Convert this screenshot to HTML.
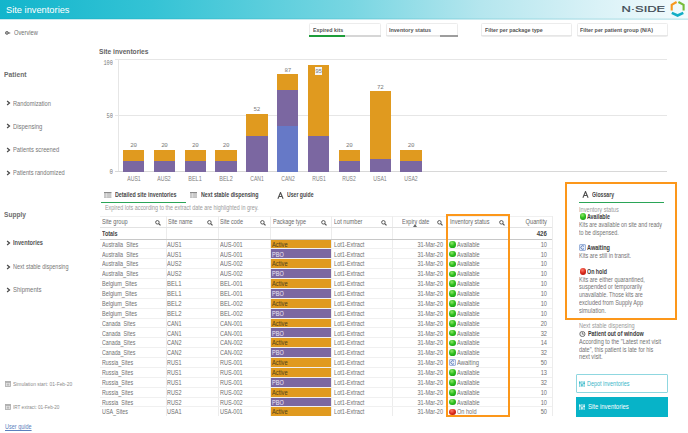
<!DOCTYPE html>
<html><head><meta charset="utf-8"><style>
html,body{margin:0;padding:0;background:#fff;width:688px;height:433px;overflow:hidden;position:relative}
.t{position:absolute;white-space:nowrap;font-family:"Liberation Sans",sans-serif}
.b{position:absolute}
</style></head><body>
<div class="b" style="left:0px;top:0px;width:688px;height:19px;background:linear-gradient(90deg,#12b5cc 0%,#34c3d5 22%,#78d6e2 51%,#b5e6ee 70%,#daf2f7 87%,#f3fbfd 100%);"></div>
<div class="b" style="left:0px;top:18px;width:688px;height:1px;background:rgba(0,150,170,0.10);"></div>
<div class="b" style="left:0px;top:19px;width:688px;height:0.6px;background:rgba(40,170,190,0.25);"></div>
<div class="t" style="left:6.00px;top:4.88px;font-size:9.8px;line-height:9.8px;color:#ffffff;font-weight:400;letter-spacing:0px;font-family:'Liberation Sans', sans-serif;transform:scaleX(0.948);transform-origin:left center;">Site inventories</div>
<svg class="b" style="left:620px;top:0px" width="50" height="19" viewBox="0 0 50 19"><text x="1.5" y="11.8" font-family="Liberation Sans" font-weight="400" font-size="8.5" fill="#3d4852" stroke="#3d4852" stroke-width="0.2" textLength="43.6" lengthAdjust="spacingAndGlyphs">N&#183;SIDE</text></svg>
<svg class="b" style="left:669px;top:0px" width="19" height="19" viewBox="0 0 19 19">
<path d="M7.6 2.0 L2.7 4.8 L2.7 10.6" stroke="#f7981f" stroke-width="2.1" fill="none"/>
<path d="M9.4 2.0 L14.6 4.8 L14.6 10.6" stroke="#76bc3a" stroke-width="2.1" fill="none"/>
<path d="M2.8 12.8 L8.6 15.5 L14.3 12.8" stroke="#13aec6" stroke-width="2.5" fill="none"/>
</svg>
<svg class="b" style="left:4.8px;top:31.1px" width="7" height="4" viewBox="0 0 7 4"><circle cx="1.9" cy="1.9" r="1.45" stroke="#666" stroke-width="0.9" fill="#aaa"/><path d="M3.3 0.9 L5.9 1.9 L3.3 2.9 Z" fill="#666"/></svg>
<div class="t" style="left:14.10px;top:29.82px;font-size:6.6px;line-height:6.6px;color:#707070;font-weight:400;letter-spacing:0px;font-family:'Liberation Sans', sans-serif;transform:scaleX(0.8696);transform-origin:left center;">Overview</div>
<div class="b" style="left:309.4px;top:23.4px;width:71.4px;height:14px;background:#fff;border:1px solid #ececec;box-sizing:border-box;border-radius:1.5px;"></div>
<div class="t" style="left:313.30px;top:26.51px;font-size:6.0px;line-height:6.0px;color:#555;font-weight:700;letter-spacing:0px;font-family:'Liberation Sans', sans-serif;transform:scaleX(0.8878);transform-origin:left center;">Expired kits</div>
<div class="b" style="left:309.4px;top:35.3px;width:71.4px;height:2px;background:#d6d6d6;"></div>
<div class="b" style="left:309.4px;top:35.3px;width:36px;height:2px;background:#1e9d3a;"></div>
<div class="b" style="left:385.5px;top:23.4px;width:72px;height:14px;background:#fff;border:1px solid #ececec;box-sizing:border-box;border-radius:1.5px;"></div>
<div class="t" style="left:389.40px;top:26.51px;font-size:6.0px;line-height:6.0px;color:#555;font-weight:700;letter-spacing:0px;font-family:'Liberation Sans', sans-serif;transform:scaleX(0.9081);transform-origin:left center;">Inventory status</div>
<div class="b" style="left:385.5px;top:35.3px;width:72px;height:1px;background:#e6e6e6;"></div>
<div class="b" style="left:439.5px;top:35.3px;width:18px;height:2px;background:#9d9d9d;"></div>
<div class="b" style="left:480.7px;top:23.4px;width:91px;height:14px;background:#fff;border:1px solid #ececec;box-sizing:border-box;border-radius:1.5px;"></div>
<div class="t" style="left:484.60px;top:26.51px;font-size:6.0px;line-height:6.0px;color:#555;font-weight:700;letter-spacing:0px;font-family:'Liberation Sans', sans-serif;transform:scaleX(0.8843);transform-origin:left center;">Filter per package type</div>
<div class="b" style="left:480.7px;top:35.3px;width:91px;height:1px;background:#e6e6e6;"></div>
<div class="b" style="left:576.5px;top:23.4px;width:91.3px;height:14px;background:#fff;border:1px solid #ececec;box-sizing:border-box;border-radius:1.5px;"></div>
<div class="t" style="left:580.40px;top:26.51px;font-size:6.0px;line-height:6.0px;color:#555;font-weight:700;letter-spacing:0px;font-family:'Liberation Sans', sans-serif;transform:scaleX(0.8938);transform-origin:left center;">Filter per patient group (N/A)</div>
<div class="b" style="left:576.5px;top:35.3px;width:91.3px;height:1px;background:#e6e6e6;"></div>
<div class="t" style="left:4.00px;top:71.34px;font-size:8.0px;line-height:8.0px;color:#6c6c6c;font-weight:700;letter-spacing:0px;font-family:'Liberation Sans', sans-serif;transform:scaleX(0.8436);transform-origin:left center;">Patient</div>
<svg class="b" style="left:6.0px;top:100.4px" width="5" height="6" viewBox="0 0 5 6"><path d="M1.1 1.0 L3.5 3 L1.1 5.0" stroke="#4a4a4a" stroke-width="1.25" fill="none"/></svg>
<div class="t" style="left:13.40px;top:100.72px;font-size:6.6px;line-height:6.6px;color:#777;font-weight:400;letter-spacing:0px;font-family:'Liberation Sans', sans-serif;transform:scaleX(0.8617);transform-origin:left center;">Randomization</div>
<svg class="b" style="left:6.0px;top:123.4px" width="5" height="6" viewBox="0 0 5 6"><path d="M1.1 1.0 L3.5 3 L1.1 5.0" stroke="#4a4a4a" stroke-width="1.25" fill="none"/></svg>
<div class="t" style="left:13.40px;top:123.72px;font-size:6.6px;line-height:6.6px;color:#777;font-weight:400;letter-spacing:0px;font-family:'Liberation Sans', sans-serif;transform:scaleX(0.8981);transform-origin:left center;">Dispensing</div>
<svg class="b" style="left:6.0px;top:147px" width="5" height="6" viewBox="0 0 5 6"><path d="M1.1 1.0 L3.5 3 L1.1 5.0" stroke="#4a4a4a" stroke-width="1.25" fill="none"/></svg>
<div class="t" style="left:13.40px;top:147.32px;font-size:6.6px;line-height:6.6px;color:#777;font-weight:400;letter-spacing:0px;font-family:'Liberation Sans', sans-serif;transform:scaleX(0.8751);transform-origin:left center;">Patients screened</div>
<svg class="b" style="left:6.0px;top:170px" width="5" height="6" viewBox="0 0 5 6"><path d="M1.1 1.0 L3.5 3 L1.1 5.0" stroke="#4a4a4a" stroke-width="1.25" fill="none"/></svg>
<div class="t" style="left:13.40px;top:170.32px;font-size:6.6px;line-height:6.6px;color:#777;font-weight:400;letter-spacing:0px;font-family:'Liberation Sans', sans-serif;transform:scaleX(0.8599);transform-origin:left center;">Patients randomized</div>
<div class="t" style="left:3.50px;top:211.34px;font-size:8.0px;line-height:8.0px;color:#6c6c6c;font-weight:700;letter-spacing:0px;font-family:'Liberation Sans', sans-serif;transform:scaleX(0.8211);transform-origin:left center;">Supply</div>
<svg class="b" style="left:6.0px;top:240px" width="5" height="6" viewBox="0 0 5 6"><path d="M1.1 1.0 L3.5 3 L1.1 5.0" stroke="#4a4a4a" stroke-width="1.25" fill="none"/></svg>
<div class="t" style="left:13.10px;top:240.32px;font-size:6.6px;line-height:6.6px;color:#555;font-weight:700;letter-spacing:0px;font-family:'Liberation Sans', sans-serif;transform:scaleX(0.8526);transform-origin:left center;">Inventories</div>
<svg class="b" style="left:6.0px;top:263.8px" width="5" height="6" viewBox="0 0 5 6"><path d="M1.1 1.0 L3.5 3 L1.1 5.0" stroke="#4a4a4a" stroke-width="1.25" fill="none"/></svg>
<div class="t" style="left:13.10px;top:264.12px;font-size:6.6px;line-height:6.6px;color:#777;font-weight:400;letter-spacing:0px;font-family:'Liberation Sans', sans-serif;transform:scaleX(0.8366);transform-origin:left center;">Next stable dispensing</div>
<svg class="b" style="left:6.0px;top:287px" width="5" height="6" viewBox="0 0 5 6"><path d="M1.1 1.0 L3.5 3 L1.1 5.0" stroke="#4a4a4a" stroke-width="1.25" fill="none"/></svg>
<div class="t" style="left:13.10px;top:287.32px;font-size:6.6px;line-height:6.6px;color:#777;font-weight:400;letter-spacing:0px;font-family:'Liberation Sans', sans-serif;transform:scaleX(0.9115);transform-origin:left center;">Shipments</div>
<svg class="b" style="left:5.2px;top:380.8px" width="6" height="6" viewBox="0 0 6 6"><rect x="0.5" y="0.5" width="5" height="5" fill="#e4e4e4" stroke="#aaa" stroke-width="0.8"/><rect x="0.5" y="0.5" width="5" height="1.3" fill="#aaa"/><rect x="1.8" y="2.6" width="2.4" height="2" fill="#bbb"/></svg>
<div class="t" style="left:13.00px;top:381.01px;font-size:6.0px;line-height:6.0px;color:#8a8a8a;font-weight:400;letter-spacing:0px;font-family:'Liberation Sans', sans-serif;transform:scaleX(0.818);transform-origin:left center;">Simulation start: 01-Feb-20</div>
<svg class="b" style="left:5.2px;top:404.2px" width="6" height="6" viewBox="0 0 6 6"><rect x="0.5" y="0.5" width="5" height="5" fill="#e4e4e4" stroke="#aaa" stroke-width="0.8"/><rect x="0.5" y="0.5" width="5" height="1.3" fill="#aaa"/><rect x="1.8" y="2.6" width="2.4" height="2" fill="#bbb"/></svg>
<div class="t" style="left:13.00px;top:404.21px;font-size:6.0px;line-height:6.0px;color:#8a8a8a;font-weight:400;letter-spacing:0px;font-family:'Liberation Sans', sans-serif;transform:scaleX(0.7715);transform-origin:left center;">IRT extract: 01-Feb-20</div>
<div class="t" style="left:5.10px;top:424.02px;font-size:6.6px;line-height:6.6px;color:#5c80bd;font-weight:400;letter-spacing:0px;font-family:'Liberation Sans', sans-serif;transform:scaleX(0.8341);transform-origin:left center;text-decoration:underline;text-decoration-thickness:0.6px;text-underline-offset:1px;">User guide</div>
<div class="t" style="left:99.00px;top:47.54px;font-size:8.0px;line-height:8.0px;color:#636363;font-weight:700;letter-spacing:0px;font-family:'Liberation Sans', sans-serif;transform:scaleX(0.8308);transform-origin:left center;">Site inventories</div>
<div class="b" style="left:114.5px;top:59.3px;width:552.4px;height:1px;background:#e6e6e6;"></div>
<div class="t" style="right:574.70px;text-align:right;top:60.56px;font-size:6.6px;line-height:6.6px;color:#7a7a7a;font-weight:400;letter-spacing:0px;font-family:'Liberation Mono', monospace;transform:scaleX(0.8);transform-origin:right center;">100</div>
<div class="b" style="left:114.5px;top:115.4px;width:552.4px;height:1px;background:#e6e6e6;"></div>
<div class="t" style="right:574.70px;text-align:right;top:114.26px;font-size:6.6px;line-height:6.6px;color:#7a7a7a;font-weight:400;letter-spacing:0px;font-family:'Liberation Mono', monospace;transform:scaleX(0.8205);transform-origin:right center;">50</div>
<div class="b" style="left:114.5px;top:171.3px;width:552.4px;height:1px;background:#e6e6e6;"></div>
<div class="t" style="right:574.70px;text-align:right;top:169.76px;font-size:6.6px;line-height:6.6px;color:#7a7a7a;font-weight:400;letter-spacing:0px;font-family:'Liberation Mono', monospace;transform:scaleX(0.8819);transform-origin:right center;">0</div>
<div class="b" style="left:117.5px;top:59.8px;width:1px;height:112px;background:#e6e6e6;"></div>
<div class="b" style="left:114.5px;top:171.2px;width:552.4px;height:1.1px;background:#d8d8d8;"></div>
<div class="b" style="left:122.90px;top:160.88px;width:21.3px;height:10.72px;background:#7b67a1"></div>
<div class="b" style="left:122.90px;top:149.82px;width:21.3px;height:11.06px;background:#e09a1f"></div>
<div class="t" style="left:83.55px;width:100px;text-align:center;top:142.95px;font-size:5.9px;line-height:5.9px;color:#7c7c7c;font-weight:400;letter-spacing:-0.3px;font-family:'Liberation Mono', monospace;">20</div>
<div class="t" style="left:83.55px;width:100px;text-align:center;top:176.37px;font-size:6.5px;line-height:6.5px;color:#808080;font-weight:400;letter-spacing:0px;font-family:'Liberation Sans', sans-serif;transform:scaleX(0.7948);transform-origin:center center;">AUS1</div>
<div class="b" style="left:153.73px;top:160.88px;width:21.3px;height:10.72px;background:#7b67a1"></div>
<div class="b" style="left:153.73px;top:149.82px;width:21.3px;height:11.06px;background:#e09a1f"></div>
<div class="t" style="left:114.38px;width:100px;text-align:center;top:142.95px;font-size:5.9px;line-height:5.9px;color:#7c7c7c;font-weight:400;letter-spacing:-0.3px;font-family:'Liberation Mono', monospace;">20</div>
<div class="t" style="left:114.38px;width:100px;text-align:center;top:176.37px;font-size:6.5px;line-height:6.5px;color:#808080;font-weight:400;letter-spacing:0px;font-family:'Liberation Sans', sans-serif;transform:scaleX(0.7948);transform-origin:center center;">AUS2</div>
<div class="b" style="left:184.56px;top:160.88px;width:21.3px;height:10.72px;background:#7b67a1"></div>
<div class="b" style="left:184.56px;top:149.82px;width:21.3px;height:11.06px;background:#e09a1f"></div>
<div class="t" style="left:145.21px;width:100px;text-align:center;top:142.95px;font-size:5.9px;line-height:5.9px;color:#7c7c7c;font-weight:400;letter-spacing:-0.3px;font-family:'Liberation Mono', monospace;">20</div>
<div class="t" style="left:145.21px;width:100px;text-align:center;top:176.37px;font-size:6.5px;line-height:6.5px;color:#808080;font-weight:400;letter-spacing:0px;font-family:'Liberation Sans', sans-serif;transform:scaleX(0.8487);transform-origin:center center;">BEL1</div>
<div class="b" style="left:215.39px;top:160.88px;width:21.3px;height:10.72px;background:#7b67a1"></div>
<div class="b" style="left:215.39px;top:149.82px;width:21.3px;height:11.06px;background:#e09a1f"></div>
<div class="t" style="left:176.04px;width:100px;text-align:center;top:142.95px;font-size:5.9px;line-height:5.9px;color:#7c7c7c;font-weight:400;letter-spacing:-0.3px;font-family:'Liberation Mono', monospace;">20</div>
<div class="t" style="left:176.04px;width:100px;text-align:center;top:176.37px;font-size:6.5px;line-height:6.5px;color:#808080;font-weight:400;letter-spacing:0px;font-family:'Liberation Sans', sans-serif;transform:scaleX(0.8487);transform-origin:center center;">BEL2</div>
<div class="b" style="left:246.22px;top:135.86px;width:21.3px;height:35.74px;background:#7b67a1"></div>
<div class="b" style="left:246.22px;top:113.52px;width:21.3px;height:22.34px;background:#e09a1f"></div>
<div class="t" style="left:206.87px;width:100px;text-align:center;top:107.20px;font-size:5.9px;line-height:5.9px;color:#7c7c7c;font-weight:400;letter-spacing:-0.3px;font-family:'Liberation Mono', monospace;">52</div>
<div class="t" style="left:206.87px;width:100px;text-align:center;top:176.37px;font-size:6.5px;line-height:6.5px;color:#808080;font-weight:400;letter-spacing:0px;font-family:'Liberation Sans', sans-serif;transform:scaleX(0.7784);transform-origin:center center;">CAN1</div>
<div class="b" style="left:277.05px;top:125.80px;width:21.3px;height:45.80px;background:#6679c7"></div>
<div class="b" style="left:277.05px;top:90.06px;width:21.3px;height:35.74px;background:#7b67a1"></div>
<div class="b" style="left:277.05px;top:74.42px;width:21.3px;height:15.64px;background:#e09a1f"></div>
<div class="t" style="left:237.70px;width:100px;text-align:center;top:68.11px;font-size:5.9px;line-height:5.9px;color:#7c7c7c;font-weight:400;letter-spacing:-0.3px;font-family:'Liberation Mono', monospace;">87</div>
<div class="t" style="left:237.70px;width:100px;text-align:center;top:176.37px;font-size:6.5px;line-height:6.5px;color:#808080;font-weight:400;letter-spacing:0px;font-family:'Liberation Sans', sans-serif;transform:scaleX(0.7784);transform-origin:center center;">CAN2</div>
<div class="b" style="left:307.88px;top:135.86px;width:21.3px;height:35.74px;background:#7b67a1"></div>
<div class="b" style="left:307.88px;top:65.49px;width:21.3px;height:70.37px;background:#e09a1f"></div>
<div class="b" style="left:315px;top:67px;width:7.2px;height:8px;background:#f4f5f7;"></div>
<div class="t" style="left:268.43px;width:100px;text-align:center;top:68.79px;font-size:5.9px;line-height:5.9px;color:#7c7c7c;font-weight:400;letter-spacing:-0.3px;font-family:'Liberation Mono', monospace;">95</div>
<div class="t" style="left:268.53px;width:100px;text-align:center;top:176.37px;font-size:6.5px;line-height:6.5px;color:#808080;font-weight:400;letter-spacing:0px;font-family:'Liberation Sans', sans-serif;transform:scaleX(0.7784);transform-origin:center center;">RUS1</div>
<div class="b" style="left:338.71px;top:160.88px;width:21.3px;height:10.72px;background:#7b67a1"></div>
<div class="b" style="left:338.71px;top:149.82px;width:21.3px;height:11.06px;background:#e09a1f"></div>
<div class="t" style="left:299.36px;width:100px;text-align:center;top:142.95px;font-size:5.9px;line-height:5.9px;color:#7c7c7c;font-weight:400;letter-spacing:-0.3px;font-family:'Liberation Mono', monospace;">20</div>
<div class="t" style="left:299.36px;width:100px;text-align:center;top:176.37px;font-size:6.5px;line-height:6.5px;color:#808080;font-weight:400;letter-spacing:0px;font-family:'Liberation Sans', sans-serif;transform:scaleX(0.7784);transform-origin:center center;">RUS2</div>
<div class="b" style="left:369.54px;top:158.75px;width:21.3px;height:12.85px;background:#7b67a1"></div>
<div class="b" style="left:369.54px;top:91.18px;width:21.3px;height:67.58px;background:#e09a1f"></div>
<div class="t" style="left:330.19px;width:100px;text-align:center;top:84.86px;font-size:5.9px;line-height:5.9px;color:#7c7c7c;font-weight:400;letter-spacing:-0.3px;font-family:'Liberation Mono', monospace;">72</div>
<div class="t" style="left:330.19px;width:100px;text-align:center;top:176.37px;font-size:6.5px;line-height:6.5px;color:#808080;font-weight:400;letter-spacing:0px;font-family:'Liberation Sans', sans-serif;transform:scaleX(0.7948);transform-origin:center center;">USA1</div>
<div class="b" style="left:400.37px;top:160.88px;width:21.3px;height:10.72px;background:#7b67a1"></div>
<div class="b" style="left:400.37px;top:149.82px;width:21.3px;height:11.06px;background:#e09a1f"></div>
<div class="t" style="left:361.02px;width:100px;text-align:center;top:142.95px;font-size:5.9px;line-height:5.9px;color:#7c7c7c;font-weight:400;letter-spacing:-0.3px;font-family:'Liberation Mono', monospace;">20</div>
<div class="t" style="left:361.02px;width:100px;text-align:center;top:176.37px;font-size:6.5px;line-height:6.5px;color:#808080;font-weight:400;letter-spacing:0px;font-family:'Liberation Sans', sans-serif;transform:scaleX(0.7948);transform-origin:center center;">USA2</div>
<svg class="b" style="left:104.2px;top:191.8px" width="7.4" height="6.4" viewBox="0 0 7.4 6.4"><rect x="0" y="0" width="7.4" height="6.4" fill="#c9c9c9"/><rect x="0" y="0" width="7.4" height="1.1" fill="#8a8a8a"/><path d="M2.6 1.1 V6.4" stroke="#eeeeee" stroke-width="0.6"/><path d="M0 6.1 H7.4" stroke="#b5b5b5" stroke-width="0.6"/></svg>
<div class="t" style="left:115.00px;top:192.02px;font-size:6.8px;line-height:6.8px;color:#484848;font-weight:700;letter-spacing:0px;font-family:'Liberation Sans', sans-serif;transform:scaleX(0.7864);transform-origin:left center;">Detailed site inventories</div>
<svg class="b" style="left:190.1px;top:191.8px" width="7.4" height="6.4" viewBox="0 0 7.4 6.4"><rect x="0" y="0" width="7.4" height="6.4" fill="#c9c9c9"/><rect x="0" y="0" width="7.4" height="1.1" fill="#8a8a8a"/><path d="M2.6 1.1 V6.4" stroke="#eeeeee" stroke-width="0.6"/><path d="M0 6.1 H7.4" stroke="#b5b5b5" stroke-width="0.6"/></svg>
<div class="t" style="left:201.00px;top:192.02px;font-size:6.8px;line-height:6.8px;color:#484848;font-weight:700;letter-spacing:0px;font-family:'Liberation Sans', sans-serif;transform:scaleX(0.7767);transform-origin:left center;">Next stable dispensing</div>
<svg class="b" style="left:277px;top:191.5px" width="7" height="7" viewBox="0 0 7 7"><path d="M0.9 6.7 L3.5 0.5 L6.1 6.7 M2.0 4.5 H5.0" stroke="#505050" stroke-width="1.1" fill="none"/></svg>
<div class="t" style="left:287.00px;top:192.02px;font-size:6.8px;line-height:6.8px;color:#484848;font-weight:700;letter-spacing:0px;font-family:'Liberation Sans', sans-serif;transform:scaleX(0.7541);transform-origin:left center;">User guide</div>
<div class="b" style="left:100.8px;top:201.8px;width:85.2px;height:1.3px;background:#2aa557;"></div>
<div class="t" style="left:104.90px;top:205.36px;font-size:6.3px;line-height:6.3px;color:#9a9a9a;font-weight:400;letter-spacing:0px;font-family:'Liberation Sans', sans-serif;transform:scaleX(0.857);transform-origin:left center;">Expired lots according to the extract date are highlighted in grey.</div>
<div class="b" style="left:100px;top:216px;width:451.5px;height:1px;background:#f0f0f0;"></div>
<div class="b" style="left:165.6px;top:216px;width:1px;height:200px;background:#ececec;"></div>
<div class="b" style="left:217.7px;top:216px;width:1px;height:200px;background:#ececec;"></div>
<div class="b" style="left:270.4px;top:216px;width:1px;height:200px;background:#ececec;"></div>
<div class="b" style="left:331.3px;top:216px;width:1px;height:200px;background:#ececec;"></div>
<div class="b" style="left:391.8px;top:216px;width:1px;height:200px;background:#ececec;"></div>
<div class="b" style="left:445.6px;top:216px;width:1px;height:200px;background:#ececec;"></div>
<div class="b" style="left:509px;top:216px;width:1px;height:200px;background:#ececec;"></div>
<div class="b" style="left:551.5px;top:216px;width:1px;height:200px;background:#ececec;"></div>
<div class="b" style="left:100px;top:227.2px;width:451.5px;height:1px;background:#e2e2e2;"></div>
<div class="b" style="left:100px;top:239px;width:451.5px;height:1px;background:#c8c8c8;"></div>
<div class="t" style="left:102.20px;top:219.22px;font-size:6.4px;line-height:6.4px;color:#6a6a6a;font-weight:400;letter-spacing:0px;font-family:'Liberation Sans', sans-serif;transform:scaleX(0.8819);transform-origin:left center;">Site group</div>
<svg class="b" style="left:155px;top:219.9px" width="6" height="6" viewBox="0 0 6 6"><circle cx="2.4" cy="2.3" r="1.75" stroke="#505050" stroke-width="0.95" fill="none"/><path d="M3.7 3.6 L5.5 5.4" stroke="#505050" stroke-width="1.25"/></svg>
<div class="t" style="left:167.80px;top:219.22px;font-size:6.4px;line-height:6.4px;color:#6a6a6a;font-weight:400;letter-spacing:0px;font-family:'Liberation Sans', sans-serif;transform:scaleX(0.8547);transform-origin:left center;">Site name</div>
<svg class="b" style="left:207.4px;top:219.9px" width="6" height="6" viewBox="0 0 6 6"><circle cx="2.4" cy="2.3" r="1.75" stroke="#505050" stroke-width="0.95" fill="none"/><path d="M3.7 3.6 L5.5 5.4" stroke="#505050" stroke-width="1.25"/></svg>
<div class="t" style="left:219.90px;top:219.22px;font-size:6.4px;line-height:6.4px;color:#6a6a6a;font-weight:400;letter-spacing:0px;font-family:'Liberation Sans', sans-serif;transform:scaleX(0.8628);transform-origin:left center;">Site code</div>
<svg class="b" style="left:259.8px;top:219.9px" width="6" height="6" viewBox="0 0 6 6"><circle cx="2.4" cy="2.3" r="1.75" stroke="#505050" stroke-width="0.95" fill="none"/><path d="M3.7 3.6 L5.5 5.4" stroke="#505050" stroke-width="1.25"/></svg>
<div class="t" style="left:272.60px;top:219.22px;font-size:6.4px;line-height:6.4px;color:#6a6a6a;font-weight:400;letter-spacing:0px;font-family:'Liberation Sans', sans-serif;transform:scaleX(0.8545);transform-origin:left center;">Package type</div>
<svg class="b" style="left:320.9px;top:219.9px" width="6" height="6" viewBox="0 0 6 6"><circle cx="2.4" cy="2.3" r="1.75" stroke="#505050" stroke-width="0.95" fill="none"/><path d="M3.7 3.6 L5.5 5.4" stroke="#505050" stroke-width="1.25"/></svg>
<div class="t" style="left:333.50px;top:219.22px;font-size:6.4px;line-height:6.4px;color:#6a6a6a;font-weight:400;letter-spacing:0px;font-family:'Liberation Sans', sans-serif;transform:scaleX(0.8785);transform-origin:left center;">Lot number</div>
<svg class="b" style="left:381.4px;top:219.9px" width="6" height="6" viewBox="0 0 6 6"><circle cx="2.4" cy="2.3" r="1.75" stroke="#505050" stroke-width="0.95" fill="none"/><path d="M3.7 3.6 L5.5 5.4" stroke="#505050" stroke-width="1.25"/></svg>
<div class="t" style="left:401.50px;top:219.22px;font-size:6.4px;line-height:6.4px;color:#6a6a6a;font-weight:400;letter-spacing:0px;font-family:'Liberation Sans', sans-serif;transform:scaleX(0.8535);transform-origin:left center;">Expiry date</div>
<svg class="b" style="left:413px;top:224.3px" width="4" height="3" viewBox="0 0 4 3"><path d="M0 3 L2 0 L4 3 Z" fill="#666"/></svg>
<svg class="b" style="left:436.9px;top:219.9px" width="6" height="6" viewBox="0 0 6 6"><circle cx="2.4" cy="2.3" r="1.75" stroke="#505050" stroke-width="0.95" fill="none"/><path d="M3.7 3.6 L5.5 5.4" stroke="#505050" stroke-width="1.25"/></svg>
<div class="t" style="left:449.70px;top:219.22px;font-size:6.4px;line-height:6.4px;color:#6a6a6a;font-weight:400;letter-spacing:0px;font-family:'Liberation Sans', sans-serif;transform:scaleX(0.8753);transform-origin:left center;">Inventory status</div>
<svg class="b" style="left:499px;top:219.9px" width="6" height="6" viewBox="0 0 6 6"><circle cx="2.4" cy="2.3" r="1.75" stroke="#505050" stroke-width="0.95" fill="none"/><path d="M3.7 3.6 L5.5 5.4" stroke="#505050" stroke-width="1.25"/></svg>
<div class="t" style="right:141.20px;text-align:right;top:219.22px;font-size:6.4px;line-height:6.4px;color:#6a6a6a;font-weight:400;letter-spacing:0px;font-family:'Liberation Sans', sans-serif;transform:scaleX(0.8903);transform-origin:right center;">Quantity</div>
<div class="t" style="left:102.30px;top:230.72px;font-size:6.4px;line-height:6.4px;color:#444;font-weight:700;letter-spacing:0px;font-family:'Liberation Sans', sans-serif;transform:scaleX(0.8443);transform-origin:left center;">Totals</div>
<div class="t" style="right:141.30px;text-align:right;top:230.67px;font-size:6.5px;line-height:6.5px;color:#444;font-weight:700;letter-spacing:0px;font-family:'Liberation Sans', sans-serif;transform:scaleX(0.9393);transform-origin:right center;">426</div>
<div class="t" style="left:102.30px;top:241.70px;font-size:6.3px;line-height:6.3px;color:#707070;font-weight:400;letter-spacing:0px;font-family:'Liberation Sans', sans-serif;transform:scaleX(0.8619);transform-origin:left center;">Australia_Sites</div>
<div class="t" style="left:167.30px;top:241.70px;font-size:6.3px;line-height:6.3px;color:#707070;font-weight:400;letter-spacing:0px;font-family:'Liberation Sans', sans-serif;transform:scaleX(0.8813);transform-origin:left center;">AUS1</div>
<div class="t" style="left:219.80px;top:241.70px;font-size:6.3px;line-height:6.3px;color:#707070;font-weight:400;letter-spacing:0px;font-family:'Liberation Sans', sans-serif;transform:scaleX(0.888);transform-origin:left center;">AUS-001</div>
<div class="b" style="left:271px;top:240px;width:60px;height:8px;background:#e09a1f"></div>
<div class="t" style="left:272.20px;top:241.70px;font-size:6.3px;line-height:6.3px;color:#4d3f1d;font-weight:400;letter-spacing:0px;font-family:'Liberation Sans', sans-serif;transform:scaleX(0.9093);transform-origin:left center;">Active</div>
<div class="t" style="left:333.60px;top:241.70px;font-size:6.3px;line-height:6.3px;color:#707070;font-weight:400;letter-spacing:0px;font-family:'Liberation Sans', sans-serif;transform:scaleX(0.8924);transform-origin:left center;">Lot1-Extract</div>
<div class="t" style="right:245.30px;text-align:right;top:241.70px;font-size:6.3px;line-height:6.3px;color:#707070;font-weight:400;letter-spacing:0px;font-family:'Liberation Sans', sans-serif;transform:scaleX(0.8813);transform-origin:right center;">31-Mar-20</div>
<div class="b" style="left:449.2px;top:240.89px;width:6.7px;height:6.7px;border-radius:50%;background:radial-gradient(circle at 40% 30%,#8fe86a 0%,#2fbf1f 45%,#179214 100%)"></div>
<div class="t" style="left:457.10px;top:241.70px;font-size:6.3px;line-height:6.3px;color:#707070;font-weight:400;letter-spacing:0px;font-family:'Liberation Sans', sans-serif;transform:scaleX(0.8879);transform-origin:left center;">Available</div>
<div class="t" style="right:141.30px;text-align:right;top:241.70px;font-size:6.3px;line-height:6.3px;color:#707070;font-weight:400;letter-spacing:0px;font-family:'Liberation Sans', sans-serif;transform:scaleX(0.898);transform-origin:right center;">10</div>
<div class="b" style="left:100px;top:248px;width:451.5px;height:1px;background:#f0f0f0;"></div>
<div class="t" style="left:102.30px;top:251.57px;font-size:6.3px;line-height:6.3px;color:#707070;font-weight:400;letter-spacing:0px;font-family:'Liberation Sans', sans-serif;transform:scaleX(0.8619);transform-origin:left center;">Australia_Sites</div>
<div class="t" style="left:167.30px;top:251.57px;font-size:6.3px;line-height:6.3px;color:#707070;font-weight:400;letter-spacing:0px;font-family:'Liberation Sans', sans-serif;transform:scaleX(0.8813);transform-origin:left center;">AUS1</div>
<div class="t" style="left:219.80px;top:251.57px;font-size:6.3px;line-height:6.3px;color:#707070;font-weight:400;letter-spacing:0px;font-family:'Liberation Sans', sans-serif;transform:scaleX(0.888);transform-origin:left center;">AUS-001</div>
<div class="b" style="left:271px;top:249px;width:60px;height:9px;background:#7b67a1"></div>
<div class="t" style="left:272.20px;top:251.57px;font-size:6.3px;line-height:6.3px;color:#eeeaf6;font-weight:400;letter-spacing:0px;font-family:'Liberation Sans', sans-serif;transform:scaleX(0.8789);transform-origin:left center;">PBO</div>
<div class="t" style="left:333.60px;top:251.57px;font-size:6.3px;line-height:6.3px;color:#707070;font-weight:400;letter-spacing:0px;font-family:'Liberation Sans', sans-serif;transform:scaleX(0.8924);transform-origin:left center;">Lot1-Extract</div>
<div class="t" style="right:245.30px;text-align:right;top:251.57px;font-size:6.3px;line-height:6.3px;color:#707070;font-weight:400;letter-spacing:0px;font-family:'Liberation Sans', sans-serif;transform:scaleX(0.8813);transform-origin:right center;">31-Mar-20</div>
<div class="b" style="left:449.2px;top:250.76px;width:6.7px;height:6.7px;border-radius:50%;background:radial-gradient(circle at 40% 30%,#8fe86a 0%,#2fbf1f 45%,#179214 100%)"></div>
<div class="t" style="left:457.10px;top:251.57px;font-size:6.3px;line-height:6.3px;color:#707070;font-weight:400;letter-spacing:0px;font-family:'Liberation Sans', sans-serif;transform:scaleX(0.8879);transform-origin:left center;">Available</div>
<div class="t" style="right:141.30px;text-align:right;top:251.57px;font-size:6.3px;line-height:6.3px;color:#707070;font-weight:400;letter-spacing:0px;font-family:'Liberation Sans', sans-serif;transform:scaleX(0.898);transform-origin:right center;">10</div>
<div class="b" style="left:100px;top:258px;width:451.5px;height:1px;background:#f0f0f0;"></div>
<div class="t" style="left:102.30px;top:261.44px;font-size:6.3px;line-height:6.3px;color:#707070;font-weight:400;letter-spacing:0px;font-family:'Liberation Sans', sans-serif;transform:scaleX(0.8619);transform-origin:left center;">Australia_Sites</div>
<div class="t" style="left:167.30px;top:261.44px;font-size:6.3px;line-height:6.3px;color:#707070;font-weight:400;letter-spacing:0px;font-family:'Liberation Sans', sans-serif;transform:scaleX(0.8813);transform-origin:left center;">AUS2</div>
<div class="t" style="left:219.80px;top:261.44px;font-size:6.3px;line-height:6.3px;color:#707070;font-weight:400;letter-spacing:0px;font-family:'Liberation Sans', sans-serif;transform:scaleX(0.888);transform-origin:left center;">AUS-002</div>
<div class="b" style="left:271px;top:259px;width:60px;height:9px;background:#e09a1f"></div>
<div class="t" style="left:272.20px;top:261.44px;font-size:6.3px;line-height:6.3px;color:#4d3f1d;font-weight:400;letter-spacing:0px;font-family:'Liberation Sans', sans-serif;transform:scaleX(0.9093);transform-origin:left center;">Active</div>
<div class="t" style="left:333.60px;top:261.44px;font-size:6.3px;line-height:6.3px;color:#707070;font-weight:400;letter-spacing:0px;font-family:'Liberation Sans', sans-serif;transform:scaleX(0.8924);transform-origin:left center;">Lot1-Extract</div>
<div class="t" style="right:245.30px;text-align:right;top:261.44px;font-size:6.3px;line-height:6.3px;color:#707070;font-weight:400;letter-spacing:0px;font-family:'Liberation Sans', sans-serif;transform:scaleX(0.8813);transform-origin:right center;">31-Mar-20</div>
<div class="b" style="left:449.2px;top:260.62px;width:6.7px;height:6.7px;border-radius:50%;background:radial-gradient(circle at 40% 30%,#8fe86a 0%,#2fbf1f 45%,#179214 100%)"></div>
<div class="t" style="left:457.10px;top:261.44px;font-size:6.3px;line-height:6.3px;color:#707070;font-weight:400;letter-spacing:0px;font-family:'Liberation Sans', sans-serif;transform:scaleX(0.8879);transform-origin:left center;">Available</div>
<div class="t" style="right:141.30px;text-align:right;top:261.44px;font-size:6.3px;line-height:6.3px;color:#707070;font-weight:400;letter-spacing:0px;font-family:'Liberation Sans', sans-serif;transform:scaleX(0.898);transform-origin:right center;">10</div>
<div class="b" style="left:100px;top:268px;width:451.5px;height:1px;background:#f0f0f0;"></div>
<div class="t" style="left:102.30px;top:271.31px;font-size:6.3px;line-height:6.3px;color:#707070;font-weight:400;letter-spacing:0px;font-family:'Liberation Sans', sans-serif;transform:scaleX(0.8619);transform-origin:left center;">Australia_Sites</div>
<div class="t" style="left:167.30px;top:271.31px;font-size:6.3px;line-height:6.3px;color:#707070;font-weight:400;letter-spacing:0px;font-family:'Liberation Sans', sans-serif;transform:scaleX(0.8813);transform-origin:left center;">AUS2</div>
<div class="t" style="left:219.80px;top:271.31px;font-size:6.3px;line-height:6.3px;color:#707070;font-weight:400;letter-spacing:0px;font-family:'Liberation Sans', sans-serif;transform:scaleX(0.888);transform-origin:left center;">AUS-002</div>
<div class="b" style="left:271px;top:269px;width:60px;height:9px;background:#7b67a1"></div>
<div class="t" style="left:272.20px;top:271.31px;font-size:6.3px;line-height:6.3px;color:#eeeaf6;font-weight:400;letter-spacing:0px;font-family:'Liberation Sans', sans-serif;transform:scaleX(0.8789);transform-origin:left center;">PBO</div>
<div class="t" style="left:333.60px;top:271.31px;font-size:6.3px;line-height:6.3px;color:#707070;font-weight:400;letter-spacing:0px;font-family:'Liberation Sans', sans-serif;transform:scaleX(0.8924);transform-origin:left center;">Lot1-Extract</div>
<div class="t" style="right:245.30px;text-align:right;top:271.31px;font-size:6.3px;line-height:6.3px;color:#707070;font-weight:400;letter-spacing:0px;font-family:'Liberation Sans', sans-serif;transform:scaleX(0.8813);transform-origin:right center;">31-Mar-20</div>
<div class="b" style="left:449.2px;top:270.50px;width:6.7px;height:6.7px;border-radius:50%;background:radial-gradient(circle at 40% 30%,#8fe86a 0%,#2fbf1f 45%,#179214 100%)"></div>
<div class="t" style="left:457.10px;top:271.31px;font-size:6.3px;line-height:6.3px;color:#707070;font-weight:400;letter-spacing:0px;font-family:'Liberation Sans', sans-serif;transform:scaleX(0.8879);transform-origin:left center;">Available</div>
<div class="t" style="right:141.30px;text-align:right;top:271.31px;font-size:6.3px;line-height:6.3px;color:#707070;font-weight:400;letter-spacing:0px;font-family:'Liberation Sans', sans-serif;transform:scaleX(0.898);transform-origin:right center;">10</div>
<div class="b" style="left:100px;top:278px;width:451.5px;height:1px;background:#f0f0f0;"></div>
<div class="t" style="left:102.30px;top:281.18px;font-size:6.3px;line-height:6.3px;color:#707070;font-weight:400;letter-spacing:0px;font-family:'Liberation Sans', sans-serif;transform:scaleX(0.8717);transform-origin:left center;">Belgium_Sites</div>
<div class="t" style="left:167.30px;top:281.18px;font-size:6.3px;line-height:6.3px;color:#707070;font-weight:400;letter-spacing:0px;font-family:'Liberation Sans', sans-serif;transform:scaleX(0.9412);transform-origin:left center;">BEL1</div>
<div class="t" style="left:219.80px;top:281.18px;font-size:6.3px;line-height:6.3px;color:#707070;font-weight:400;letter-spacing:0px;font-family:'Liberation Sans', sans-serif;transform:scaleX(0.9259);transform-origin:left center;">BEL-001</div>
<div class="b" style="left:271px;top:279px;width:60px;height:9px;background:#e09a1f"></div>
<div class="t" style="left:272.20px;top:281.18px;font-size:6.3px;line-height:6.3px;color:#4d3f1d;font-weight:400;letter-spacing:0px;font-family:'Liberation Sans', sans-serif;transform:scaleX(0.9093);transform-origin:left center;">Active</div>
<div class="t" style="left:333.60px;top:281.18px;font-size:6.3px;line-height:6.3px;color:#707070;font-weight:400;letter-spacing:0px;font-family:'Liberation Sans', sans-serif;transform:scaleX(0.8924);transform-origin:left center;">Lot1-Extract</div>
<div class="t" style="right:245.30px;text-align:right;top:281.18px;font-size:6.3px;line-height:6.3px;color:#707070;font-weight:400;letter-spacing:0px;font-family:'Liberation Sans', sans-serif;transform:scaleX(0.8813);transform-origin:right center;">31-Mar-20</div>
<div class="b" style="left:449.2px;top:280.37px;width:6.7px;height:6.7px;border-radius:50%;background:radial-gradient(circle at 40% 30%,#8fe86a 0%,#2fbf1f 45%,#179214 100%)"></div>
<div class="t" style="left:457.10px;top:281.18px;font-size:6.3px;line-height:6.3px;color:#707070;font-weight:400;letter-spacing:0px;font-family:'Liberation Sans', sans-serif;transform:scaleX(0.8879);transform-origin:left center;">Available</div>
<div class="t" style="right:141.30px;text-align:right;top:281.18px;font-size:6.3px;line-height:6.3px;color:#707070;font-weight:400;letter-spacing:0px;font-family:'Liberation Sans', sans-serif;transform:scaleX(0.898);transform-origin:right center;">10</div>
<div class="b" style="left:100px;top:288px;width:451.5px;height:1px;background:#f0f0f0;"></div>
<div class="t" style="left:102.30px;top:291.05px;font-size:6.3px;line-height:6.3px;color:#707070;font-weight:400;letter-spacing:0px;font-family:'Liberation Sans', sans-serif;transform:scaleX(0.8717);transform-origin:left center;">Belgium_Sites</div>
<div class="t" style="left:167.30px;top:291.05px;font-size:6.3px;line-height:6.3px;color:#707070;font-weight:400;letter-spacing:0px;font-family:'Liberation Sans', sans-serif;transform:scaleX(0.9412);transform-origin:left center;">BEL1</div>
<div class="t" style="left:219.80px;top:291.05px;font-size:6.3px;line-height:6.3px;color:#707070;font-weight:400;letter-spacing:0px;font-family:'Liberation Sans', sans-serif;transform:scaleX(0.9259);transform-origin:left center;">BEL-001</div>
<div class="b" style="left:271px;top:289px;width:60px;height:9px;background:#7b67a1"></div>
<div class="t" style="left:272.20px;top:291.05px;font-size:6.3px;line-height:6.3px;color:#eeeaf6;font-weight:400;letter-spacing:0px;font-family:'Liberation Sans', sans-serif;transform:scaleX(0.8789);transform-origin:left center;">PBO</div>
<div class="t" style="left:333.60px;top:291.05px;font-size:6.3px;line-height:6.3px;color:#707070;font-weight:400;letter-spacing:0px;font-family:'Liberation Sans', sans-serif;transform:scaleX(0.8924);transform-origin:left center;">Lot1-Extract</div>
<div class="t" style="right:245.30px;text-align:right;top:291.05px;font-size:6.3px;line-height:6.3px;color:#707070;font-weight:400;letter-spacing:0px;font-family:'Liberation Sans', sans-serif;transform:scaleX(0.8813);transform-origin:right center;">31-Mar-20</div>
<div class="b" style="left:449.2px;top:290.24px;width:6.7px;height:6.7px;border-radius:50%;background:radial-gradient(circle at 40% 30%,#8fe86a 0%,#2fbf1f 45%,#179214 100%)"></div>
<div class="t" style="left:457.10px;top:291.05px;font-size:6.3px;line-height:6.3px;color:#707070;font-weight:400;letter-spacing:0px;font-family:'Liberation Sans', sans-serif;transform:scaleX(0.8879);transform-origin:left center;">Available</div>
<div class="t" style="right:141.30px;text-align:right;top:291.05px;font-size:6.3px;line-height:6.3px;color:#707070;font-weight:400;letter-spacing:0px;font-family:'Liberation Sans', sans-serif;transform:scaleX(0.898);transform-origin:right center;">10</div>
<div class="b" style="left:100px;top:298px;width:451.5px;height:1px;background:#f0f0f0;"></div>
<div class="t" style="left:102.30px;top:300.92px;font-size:6.3px;line-height:6.3px;color:#707070;font-weight:400;letter-spacing:0px;font-family:'Liberation Sans', sans-serif;transform:scaleX(0.8717);transform-origin:left center;">Belgium_Sites</div>
<div class="t" style="left:167.30px;top:300.92px;font-size:6.3px;line-height:6.3px;color:#707070;font-weight:400;letter-spacing:0px;font-family:'Liberation Sans', sans-serif;transform:scaleX(0.9412);transform-origin:left center;">BEL2</div>
<div class="t" style="left:219.80px;top:300.92px;font-size:6.3px;line-height:6.3px;color:#707070;font-weight:400;letter-spacing:0px;font-family:'Liberation Sans', sans-serif;transform:scaleX(0.9259);transform-origin:left center;">BEL-002</div>
<div class="b" style="left:271px;top:299px;width:60px;height:9px;background:#e09a1f"></div>
<div class="t" style="left:272.20px;top:300.92px;font-size:6.3px;line-height:6.3px;color:#4d3f1d;font-weight:400;letter-spacing:0px;font-family:'Liberation Sans', sans-serif;transform:scaleX(0.9093);transform-origin:left center;">Active</div>
<div class="t" style="left:333.60px;top:300.92px;font-size:6.3px;line-height:6.3px;color:#707070;font-weight:400;letter-spacing:0px;font-family:'Liberation Sans', sans-serif;transform:scaleX(0.8924);transform-origin:left center;">Lot1-Extract</div>
<div class="t" style="right:245.30px;text-align:right;top:300.92px;font-size:6.3px;line-height:6.3px;color:#707070;font-weight:400;letter-spacing:0px;font-family:'Liberation Sans', sans-serif;transform:scaleX(0.8813);transform-origin:right center;">31-Mar-20</div>
<div class="b" style="left:449.2px;top:300.11px;width:6.7px;height:6.7px;border-radius:50%;background:radial-gradient(circle at 40% 30%,#8fe86a 0%,#2fbf1f 45%,#179214 100%)"></div>
<div class="t" style="left:457.10px;top:300.92px;font-size:6.3px;line-height:6.3px;color:#707070;font-weight:400;letter-spacing:0px;font-family:'Liberation Sans', sans-serif;transform:scaleX(0.8879);transform-origin:left center;">Available</div>
<div class="t" style="right:141.30px;text-align:right;top:300.92px;font-size:6.3px;line-height:6.3px;color:#707070;font-weight:400;letter-spacing:0px;font-family:'Liberation Sans', sans-serif;transform:scaleX(0.898);transform-origin:right center;">10</div>
<div class="b" style="left:100px;top:308px;width:451.5px;height:1px;background:#f0f0f0;"></div>
<div class="t" style="left:102.30px;top:310.79px;font-size:6.3px;line-height:6.3px;color:#707070;font-weight:400;letter-spacing:0px;font-family:'Liberation Sans', sans-serif;transform:scaleX(0.8717);transform-origin:left center;">Belgium_Sites</div>
<div class="t" style="left:167.30px;top:310.79px;font-size:6.3px;line-height:6.3px;color:#707070;font-weight:400;letter-spacing:0px;font-family:'Liberation Sans', sans-serif;transform:scaleX(0.9412);transform-origin:left center;">BEL2</div>
<div class="t" style="left:219.80px;top:310.79px;font-size:6.3px;line-height:6.3px;color:#707070;font-weight:400;letter-spacing:0px;font-family:'Liberation Sans', sans-serif;transform:scaleX(0.9259);transform-origin:left center;">BEL-002</div>
<div class="b" style="left:271px;top:309px;width:60px;height:9px;background:#7b67a1"></div>
<div class="t" style="left:272.20px;top:310.79px;font-size:6.3px;line-height:6.3px;color:#eeeaf6;font-weight:400;letter-spacing:0px;font-family:'Liberation Sans', sans-serif;transform:scaleX(0.8789);transform-origin:left center;">PBO</div>
<div class="t" style="left:333.60px;top:310.79px;font-size:6.3px;line-height:6.3px;color:#707070;font-weight:400;letter-spacing:0px;font-family:'Liberation Sans', sans-serif;transform:scaleX(0.8924);transform-origin:left center;">Lot1-Extract</div>
<div class="t" style="right:245.30px;text-align:right;top:310.79px;font-size:6.3px;line-height:6.3px;color:#707070;font-weight:400;letter-spacing:0px;font-family:'Liberation Sans', sans-serif;transform:scaleX(0.8813);transform-origin:right center;">31-Mar-20</div>
<div class="b" style="left:449.2px;top:309.97px;width:6.7px;height:6.7px;border-radius:50%;background:radial-gradient(circle at 40% 30%,#8fe86a 0%,#2fbf1f 45%,#179214 100%)"></div>
<div class="t" style="left:457.10px;top:310.79px;font-size:6.3px;line-height:6.3px;color:#707070;font-weight:400;letter-spacing:0px;font-family:'Liberation Sans', sans-serif;transform:scaleX(0.8879);transform-origin:left center;">Available</div>
<div class="t" style="right:141.30px;text-align:right;top:310.79px;font-size:6.3px;line-height:6.3px;color:#707070;font-weight:400;letter-spacing:0px;font-family:'Liberation Sans', sans-serif;transform:scaleX(0.898);transform-origin:right center;">10</div>
<div class="b" style="left:100px;top:318px;width:451.5px;height:1px;background:#f0f0f0;"></div>
<div class="t" style="left:102.30px;top:320.66px;font-size:6.3px;line-height:6.3px;color:#707070;font-weight:400;letter-spacing:0px;font-family:'Liberation Sans', sans-serif;transform:scaleX(0.8417);transform-origin:left center;">Canada_Sites</div>
<div class="t" style="left:167.30px;top:320.66px;font-size:6.3px;line-height:6.3px;color:#707070;font-weight:400;letter-spacing:0px;font-family:'Liberation Sans', sans-serif;transform:scaleX(0.8633);transform-origin:left center;">CAN1</div>
<div class="t" style="left:219.80px;top:320.66px;font-size:6.3px;line-height:6.3px;color:#707070;font-weight:400;letter-spacing:0px;font-family:'Liberation Sans', sans-serif;transform:scaleX(0.8762);transform-origin:left center;">CAN-001</div>
<div class="b" style="left:271px;top:319px;width:60px;height:8px;background:#e09a1f"></div>
<div class="t" style="left:272.20px;top:320.66px;font-size:6.3px;line-height:6.3px;color:#4d3f1d;font-weight:400;letter-spacing:0px;font-family:'Liberation Sans', sans-serif;transform:scaleX(0.9093);transform-origin:left center;">Active</div>
<div class="t" style="left:333.60px;top:320.66px;font-size:6.3px;line-height:6.3px;color:#707070;font-weight:400;letter-spacing:0px;font-family:'Liberation Sans', sans-serif;transform:scaleX(0.8924);transform-origin:left center;">Lot1-Extract</div>
<div class="t" style="right:245.30px;text-align:right;top:320.66px;font-size:6.3px;line-height:6.3px;color:#707070;font-weight:400;letter-spacing:0px;font-family:'Liberation Sans', sans-serif;transform:scaleX(0.8813);transform-origin:right center;">31-Mar-20</div>
<div class="b" style="left:449.2px;top:319.84px;width:6.7px;height:6.7px;border-radius:50%;background:radial-gradient(circle at 40% 30%,#8fe86a 0%,#2fbf1f 45%,#179214 100%)"></div>
<div class="t" style="left:457.10px;top:320.66px;font-size:6.3px;line-height:6.3px;color:#707070;font-weight:400;letter-spacing:0px;font-family:'Liberation Sans', sans-serif;transform:scaleX(0.8879);transform-origin:left center;">Available</div>
<div class="t" style="right:141.30px;text-align:right;top:320.66px;font-size:6.3px;line-height:6.3px;color:#707070;font-weight:400;letter-spacing:0px;font-family:'Liberation Sans', sans-serif;transform:scaleX(0.898);transform-origin:right center;">20</div>
<div class="b" style="left:100px;top:327px;width:451.5px;height:1px;background:#f0f0f0;"></div>
<div class="t" style="left:102.30px;top:330.53px;font-size:6.3px;line-height:6.3px;color:#707070;font-weight:400;letter-spacing:0px;font-family:'Liberation Sans', sans-serif;transform:scaleX(0.8417);transform-origin:left center;">Canada_Sites</div>
<div class="t" style="left:167.30px;top:330.53px;font-size:6.3px;line-height:6.3px;color:#707070;font-weight:400;letter-spacing:0px;font-family:'Liberation Sans', sans-serif;transform:scaleX(0.8633);transform-origin:left center;">CAN1</div>
<div class="t" style="left:219.80px;top:330.53px;font-size:6.3px;line-height:6.3px;color:#707070;font-weight:400;letter-spacing:0px;font-family:'Liberation Sans', sans-serif;transform:scaleX(0.8762);transform-origin:left center;">CAN-001</div>
<div class="b" style="left:271px;top:328px;width:60px;height:9px;background:#7b67a1"></div>
<div class="t" style="left:272.20px;top:330.53px;font-size:6.3px;line-height:6.3px;color:#eeeaf6;font-weight:400;letter-spacing:0px;font-family:'Liberation Sans', sans-serif;transform:scaleX(0.8789);transform-origin:left center;">PBO</div>
<div class="t" style="left:333.60px;top:330.53px;font-size:6.3px;line-height:6.3px;color:#707070;font-weight:400;letter-spacing:0px;font-family:'Liberation Sans', sans-serif;transform:scaleX(0.8924);transform-origin:left center;">Lot1-Extract</div>
<div class="t" style="right:245.30px;text-align:right;top:330.53px;font-size:6.3px;line-height:6.3px;color:#707070;font-weight:400;letter-spacing:0px;font-family:'Liberation Sans', sans-serif;transform:scaleX(0.8813);transform-origin:right center;">31-Mar-20</div>
<div class="b" style="left:449.2px;top:329.71px;width:6.7px;height:6.7px;border-radius:50%;background:radial-gradient(circle at 40% 30%,#8fe86a 0%,#2fbf1f 45%,#179214 100%)"></div>
<div class="t" style="left:457.10px;top:330.53px;font-size:6.3px;line-height:6.3px;color:#707070;font-weight:400;letter-spacing:0px;font-family:'Liberation Sans', sans-serif;transform:scaleX(0.8879);transform-origin:left center;">Available</div>
<div class="t" style="right:141.30px;text-align:right;top:330.53px;font-size:6.3px;line-height:6.3px;color:#707070;font-weight:400;letter-spacing:0px;font-family:'Liberation Sans', sans-serif;transform:scaleX(0.898);transform-origin:right center;">32</div>
<div class="b" style="left:100px;top:337px;width:451.5px;height:1px;background:#f0f0f0;"></div>
<div class="t" style="left:102.30px;top:340.40px;font-size:6.3px;line-height:6.3px;color:#707070;font-weight:400;letter-spacing:0px;font-family:'Liberation Sans', sans-serif;transform:scaleX(0.8417);transform-origin:left center;">Canada_Sites</div>
<div class="t" style="left:167.30px;top:340.40px;font-size:6.3px;line-height:6.3px;color:#707070;font-weight:400;letter-spacing:0px;font-family:'Liberation Sans', sans-serif;transform:scaleX(0.8633);transform-origin:left center;">CAN2</div>
<div class="t" style="left:219.80px;top:340.40px;font-size:6.3px;line-height:6.3px;color:#707070;font-weight:400;letter-spacing:0px;font-family:'Liberation Sans', sans-serif;transform:scaleX(0.8762);transform-origin:left center;">CAN-002</div>
<div class="b" style="left:271px;top:338px;width:60px;height:9px;background:#e09a1f"></div>
<div class="t" style="left:272.20px;top:340.40px;font-size:6.3px;line-height:6.3px;color:#4d3f1d;font-weight:400;letter-spacing:0px;font-family:'Liberation Sans', sans-serif;transform:scaleX(0.9093);transform-origin:left center;">Active</div>
<div class="t" style="left:333.60px;top:340.40px;font-size:6.3px;line-height:6.3px;color:#707070;font-weight:400;letter-spacing:0px;font-family:'Liberation Sans', sans-serif;transform:scaleX(0.8924);transform-origin:left center;">Lot1-Extract</div>
<div class="t" style="right:245.30px;text-align:right;top:340.40px;font-size:6.3px;line-height:6.3px;color:#707070;font-weight:400;letter-spacing:0px;font-family:'Liberation Sans', sans-serif;transform:scaleX(0.8813);transform-origin:right center;">31-Mar-20</div>
<div class="b" style="left:449.2px;top:339.58px;width:6.7px;height:6.7px;border-radius:50%;background:radial-gradient(circle at 40% 30%,#8fe86a 0%,#2fbf1f 45%,#179214 100%)"></div>
<div class="t" style="left:457.10px;top:340.40px;font-size:6.3px;line-height:6.3px;color:#707070;font-weight:400;letter-spacing:0px;font-family:'Liberation Sans', sans-serif;transform:scaleX(0.8879);transform-origin:left center;">Available</div>
<div class="t" style="right:141.30px;text-align:right;top:340.40px;font-size:6.3px;line-height:6.3px;color:#707070;font-weight:400;letter-spacing:0px;font-family:'Liberation Sans', sans-serif;transform:scaleX(0.898);transform-origin:right center;">14</div>
<div class="b" style="left:100px;top:347px;width:451.5px;height:1px;background:#f0f0f0;"></div>
<div class="t" style="left:102.30px;top:350.27px;font-size:6.3px;line-height:6.3px;color:#707070;font-weight:400;letter-spacing:0px;font-family:'Liberation Sans', sans-serif;transform:scaleX(0.8417);transform-origin:left center;">Canada_Sites</div>
<div class="t" style="left:167.30px;top:350.27px;font-size:6.3px;line-height:6.3px;color:#707070;font-weight:400;letter-spacing:0px;font-family:'Liberation Sans', sans-serif;transform:scaleX(0.8633);transform-origin:left center;">CAN2</div>
<div class="t" style="left:219.80px;top:350.27px;font-size:6.3px;line-height:6.3px;color:#707070;font-weight:400;letter-spacing:0px;font-family:'Liberation Sans', sans-serif;transform:scaleX(0.8762);transform-origin:left center;">CAN-002</div>
<div class="b" style="left:271px;top:348px;width:60px;height:9px;background:#7b67a1"></div>
<div class="t" style="left:272.20px;top:350.27px;font-size:6.3px;line-height:6.3px;color:#eeeaf6;font-weight:400;letter-spacing:0px;font-family:'Liberation Sans', sans-serif;transform:scaleX(0.8789);transform-origin:left center;">PBO</div>
<div class="t" style="left:333.60px;top:350.27px;font-size:6.3px;line-height:6.3px;color:#707070;font-weight:400;letter-spacing:0px;font-family:'Liberation Sans', sans-serif;transform:scaleX(0.8924);transform-origin:left center;">Lot1-Extract</div>
<div class="t" style="right:245.30px;text-align:right;top:350.27px;font-size:6.3px;line-height:6.3px;color:#707070;font-weight:400;letter-spacing:0px;font-family:'Liberation Sans', sans-serif;transform:scaleX(0.8813);transform-origin:right center;">31-Mar-20</div>
<div class="b" style="left:449.2px;top:349.45px;width:6.7px;height:6.7px;border-radius:50%;background:radial-gradient(circle at 40% 30%,#8fe86a 0%,#2fbf1f 45%,#179214 100%)"></div>
<div class="t" style="left:457.10px;top:350.27px;font-size:6.3px;line-height:6.3px;color:#707070;font-weight:400;letter-spacing:0px;font-family:'Liberation Sans', sans-serif;transform:scaleX(0.8879);transform-origin:left center;">Available</div>
<div class="t" style="right:141.30px;text-align:right;top:350.27px;font-size:6.3px;line-height:6.3px;color:#707070;font-weight:400;letter-spacing:0px;font-family:'Liberation Sans', sans-serif;transform:scaleX(0.898);transform-origin:right center;">32</div>
<div class="b" style="left:100px;top:357px;width:451.5px;height:1px;background:#f0f0f0;"></div>
<div class="t" style="left:102.30px;top:360.14px;font-size:6.3px;line-height:6.3px;color:#707070;font-weight:400;letter-spacing:0px;font-family:'Liberation Sans', sans-serif;transform:scaleX(0.849);transform-origin:left center;">Russia_Sites</div>
<div class="t" style="left:167.30px;top:360.14px;font-size:6.3px;line-height:6.3px;color:#707070;font-weight:400;letter-spacing:0px;font-family:'Liberation Sans', sans-serif;transform:scaleX(0.8633);transform-origin:left center;">RUS1</div>
<div class="t" style="left:219.80px;top:360.14px;font-size:6.3px;line-height:6.3px;color:#707070;font-weight:400;letter-spacing:0px;font-family:'Liberation Sans', sans-serif;transform:scaleX(0.8762);transform-origin:left center;">RUS-001</div>
<div class="b" style="left:271px;top:358px;width:60px;height:9px;background:#e09a1f"></div>
<div class="t" style="left:272.20px;top:360.14px;font-size:6.3px;line-height:6.3px;color:#4d3f1d;font-weight:400;letter-spacing:0px;font-family:'Liberation Sans', sans-serif;transform:scaleX(0.9093);transform-origin:left center;">Active</div>
<div class="t" style="left:333.60px;top:360.14px;font-size:6.3px;line-height:6.3px;color:#707070;font-weight:400;letter-spacing:0px;font-family:'Liberation Sans', sans-serif;transform:scaleX(0.8924);transform-origin:left center;">Lot1-Extract</div>
<div class="t" style="right:245.30px;text-align:right;top:360.14px;font-size:6.3px;line-height:6.3px;color:#707070;font-weight:400;letter-spacing:0px;font-family:'Liberation Sans', sans-serif;transform:scaleX(0.8813);transform-origin:right center;">31-Mar-20</div>
<svg class="b" style="left:448.90px;top:359.12px" width="7" height="7" viewBox="0 0 7 7"><rect x="0.2" y="0.2" width="6.6" height="6.6" rx="1.3" fill="#7f9ccf"/><rect x="0.9" y="0.9" width="5.2" height="5.2" rx="0.9" fill="#e9eef8"/><path d="M5.0 2.4 A1.75 1.75 0 1 0 5.0 4.6" stroke="#4b6fb3" stroke-width="0.9" fill="none"/></svg>
<div class="t" style="left:457.10px;top:360.14px;font-size:6.3px;line-height:6.3px;color:#707070;font-weight:400;letter-spacing:0px;font-family:'Liberation Sans', sans-serif;transform:scaleX(0.9288);transform-origin:left center;">Awaiting</div>
<div class="t" style="right:141.30px;text-align:right;top:360.14px;font-size:6.3px;line-height:6.3px;color:#707070;font-weight:400;letter-spacing:0px;font-family:'Liberation Sans', sans-serif;transform:scaleX(0.898);transform-origin:right center;">50</div>
<div class="b" style="left:100px;top:367px;width:451.5px;height:1px;background:#f0f0f0;"></div>
<div class="t" style="left:102.30px;top:370.01px;font-size:6.3px;line-height:6.3px;color:#707070;font-weight:400;letter-spacing:0px;font-family:'Liberation Sans', sans-serif;transform:scaleX(0.849);transform-origin:left center;">Russia_Sites</div>
<div class="t" style="left:167.30px;top:370.01px;font-size:6.3px;line-height:6.3px;color:#707070;font-weight:400;letter-spacing:0px;font-family:'Liberation Sans', sans-serif;transform:scaleX(0.8633);transform-origin:left center;">RUS1</div>
<div class="t" style="left:219.80px;top:370.01px;font-size:6.3px;line-height:6.3px;color:#707070;font-weight:400;letter-spacing:0px;font-family:'Liberation Sans', sans-serif;transform:scaleX(0.8762);transform-origin:left center;">RUS-001</div>
<div class="b" style="left:271px;top:368px;width:60px;height:9px;background:#e09a1f"></div>
<div class="t" style="left:272.20px;top:370.01px;font-size:6.3px;line-height:6.3px;color:#4d3f1d;font-weight:400;letter-spacing:0px;font-family:'Liberation Sans', sans-serif;transform:scaleX(0.9093);transform-origin:left center;">Active</div>
<div class="t" style="left:333.60px;top:370.01px;font-size:6.3px;line-height:6.3px;color:#707070;font-weight:400;letter-spacing:0px;font-family:'Liberation Sans', sans-serif;transform:scaleX(0.8924);transform-origin:left center;">Lot1-Extract</div>
<div class="t" style="right:245.30px;text-align:right;top:370.01px;font-size:6.3px;line-height:6.3px;color:#707070;font-weight:400;letter-spacing:0px;font-family:'Liberation Sans', sans-serif;transform:scaleX(0.8813);transform-origin:right center;">31-Mar-20</div>
<div class="b" style="left:449.2px;top:369.19px;width:6.7px;height:6.7px;border-radius:50%;background:radial-gradient(circle at 40% 30%,#8fe86a 0%,#2fbf1f 45%,#179214 100%)"></div>
<div class="t" style="left:457.10px;top:370.01px;font-size:6.3px;line-height:6.3px;color:#707070;font-weight:400;letter-spacing:0px;font-family:'Liberation Sans', sans-serif;transform:scaleX(0.8879);transform-origin:left center;">Available</div>
<div class="t" style="right:141.30px;text-align:right;top:370.01px;font-size:6.3px;line-height:6.3px;color:#707070;font-weight:400;letter-spacing:0px;font-family:'Liberation Sans', sans-serif;transform:scaleX(0.898);transform-origin:right center;">13</div>
<div class="b" style="left:100px;top:377px;width:451.5px;height:1px;background:#f0f0f0;"></div>
<div class="t" style="left:102.30px;top:379.88px;font-size:6.3px;line-height:6.3px;color:#707070;font-weight:400;letter-spacing:0px;font-family:'Liberation Sans', sans-serif;transform:scaleX(0.849);transform-origin:left center;">Russia_Sites</div>
<div class="t" style="left:167.30px;top:379.88px;font-size:6.3px;line-height:6.3px;color:#707070;font-weight:400;letter-spacing:0px;font-family:'Liberation Sans', sans-serif;transform:scaleX(0.8633);transform-origin:left center;">RUS1</div>
<div class="t" style="left:219.80px;top:379.88px;font-size:6.3px;line-height:6.3px;color:#707070;font-weight:400;letter-spacing:0px;font-family:'Liberation Sans', sans-serif;transform:scaleX(0.8762);transform-origin:left center;">RUS-001</div>
<div class="b" style="left:271px;top:378px;width:60px;height:9px;background:#7b67a1"></div>
<div class="t" style="left:272.20px;top:379.88px;font-size:6.3px;line-height:6.3px;color:#eeeaf6;font-weight:400;letter-spacing:0px;font-family:'Liberation Sans', sans-serif;transform:scaleX(0.8789);transform-origin:left center;">PBO</div>
<div class="t" style="left:333.60px;top:379.88px;font-size:6.3px;line-height:6.3px;color:#707070;font-weight:400;letter-spacing:0px;font-family:'Liberation Sans', sans-serif;transform:scaleX(0.8924);transform-origin:left center;">Lot1-Extract</div>
<div class="t" style="right:245.30px;text-align:right;top:379.88px;font-size:6.3px;line-height:6.3px;color:#707070;font-weight:400;letter-spacing:0px;font-family:'Liberation Sans', sans-serif;transform:scaleX(0.8813);transform-origin:right center;">31-Mar-20</div>
<div class="b" style="left:449.2px;top:379.06px;width:6.7px;height:6.7px;border-radius:50%;background:radial-gradient(circle at 40% 30%,#8fe86a 0%,#2fbf1f 45%,#179214 100%)"></div>
<div class="t" style="left:457.10px;top:379.88px;font-size:6.3px;line-height:6.3px;color:#707070;font-weight:400;letter-spacing:0px;font-family:'Liberation Sans', sans-serif;transform:scaleX(0.8879);transform-origin:left center;">Available</div>
<div class="t" style="right:141.30px;text-align:right;top:379.88px;font-size:6.3px;line-height:6.3px;color:#707070;font-weight:400;letter-spacing:0px;font-family:'Liberation Sans', sans-serif;transform:scaleX(0.898);transform-origin:right center;">32</div>
<div class="b" style="left:100px;top:387px;width:451.5px;height:1px;background:#f0f0f0;"></div>
<div class="t" style="left:102.30px;top:389.75px;font-size:6.3px;line-height:6.3px;color:#707070;font-weight:400;letter-spacing:0px;font-family:'Liberation Sans', sans-serif;transform:scaleX(0.849);transform-origin:left center;">Russia_Sites</div>
<div class="t" style="left:167.30px;top:389.75px;font-size:6.3px;line-height:6.3px;color:#707070;font-weight:400;letter-spacing:0px;font-family:'Liberation Sans', sans-serif;transform:scaleX(0.8633);transform-origin:left center;">RUS2</div>
<div class="t" style="left:219.80px;top:389.75px;font-size:6.3px;line-height:6.3px;color:#707070;font-weight:400;letter-spacing:0px;font-family:'Liberation Sans', sans-serif;transform:scaleX(0.8762);transform-origin:left center;">RUS-002</div>
<div class="b" style="left:271px;top:388px;width:60px;height:9px;background:#e09a1f"></div>
<div class="t" style="left:272.20px;top:389.75px;font-size:6.3px;line-height:6.3px;color:#4d3f1d;font-weight:400;letter-spacing:0px;font-family:'Liberation Sans', sans-serif;transform:scaleX(0.9093);transform-origin:left center;">Active</div>
<div class="t" style="left:333.60px;top:389.75px;font-size:6.3px;line-height:6.3px;color:#707070;font-weight:400;letter-spacing:0px;font-family:'Liberation Sans', sans-serif;transform:scaleX(0.8924);transform-origin:left center;">Lot1-Extract</div>
<div class="t" style="right:245.30px;text-align:right;top:389.75px;font-size:6.3px;line-height:6.3px;color:#707070;font-weight:400;letter-spacing:0px;font-family:'Liberation Sans', sans-serif;transform:scaleX(0.8813);transform-origin:right center;">31-Mar-20</div>
<div class="b" style="left:449.2px;top:388.93px;width:6.7px;height:6.7px;border-radius:50%;background:radial-gradient(circle at 40% 30%,#8fe86a 0%,#2fbf1f 45%,#179214 100%)"></div>
<div class="t" style="left:457.10px;top:389.75px;font-size:6.3px;line-height:6.3px;color:#707070;font-weight:400;letter-spacing:0px;font-family:'Liberation Sans', sans-serif;transform:scaleX(0.8879);transform-origin:left center;">Available</div>
<div class="t" style="right:141.30px;text-align:right;top:389.75px;font-size:6.3px;line-height:6.3px;color:#707070;font-weight:400;letter-spacing:0px;font-family:'Liberation Sans', sans-serif;transform:scaleX(0.898);transform-origin:right center;">10</div>
<div class="b" style="left:100px;top:397px;width:451.5px;height:1px;background:#f0f0f0;"></div>
<div class="t" style="left:102.30px;top:399.62px;font-size:6.3px;line-height:6.3px;color:#707070;font-weight:400;letter-spacing:0px;font-family:'Liberation Sans', sans-serif;transform:scaleX(0.849);transform-origin:left center;">Russia_Sites</div>
<div class="t" style="left:167.30px;top:399.62px;font-size:6.3px;line-height:6.3px;color:#707070;font-weight:400;letter-spacing:0px;font-family:'Liberation Sans', sans-serif;transform:scaleX(0.8633);transform-origin:left center;">RUS2</div>
<div class="t" style="left:219.80px;top:399.62px;font-size:6.3px;line-height:6.3px;color:#707070;font-weight:400;letter-spacing:0px;font-family:'Liberation Sans', sans-serif;transform:scaleX(0.8762);transform-origin:left center;">RUS-002</div>
<div class="b" style="left:271px;top:398px;width:60px;height:8px;background:#7b67a1"></div>
<div class="t" style="left:272.20px;top:399.62px;font-size:6.3px;line-height:6.3px;color:#eeeaf6;font-weight:400;letter-spacing:0px;font-family:'Liberation Sans', sans-serif;transform:scaleX(0.8789);transform-origin:left center;">PBO</div>
<div class="t" style="left:333.60px;top:399.62px;font-size:6.3px;line-height:6.3px;color:#707070;font-weight:400;letter-spacing:0px;font-family:'Liberation Sans', sans-serif;transform:scaleX(0.8924);transform-origin:left center;">Lot1-Extract</div>
<div class="t" style="right:245.30px;text-align:right;top:399.62px;font-size:6.3px;line-height:6.3px;color:#707070;font-weight:400;letter-spacing:0px;font-family:'Liberation Sans', sans-serif;transform:scaleX(0.8813);transform-origin:right center;">31-Mar-20</div>
<div class="b" style="left:449.2px;top:398.80px;width:6.7px;height:6.7px;border-radius:50%;background:radial-gradient(circle at 40% 30%,#8fe86a 0%,#2fbf1f 45%,#179214 100%)"></div>
<div class="t" style="left:457.10px;top:399.62px;font-size:6.3px;line-height:6.3px;color:#707070;font-weight:400;letter-spacing:0px;font-family:'Liberation Sans', sans-serif;transform:scaleX(0.8879);transform-origin:left center;">Available</div>
<div class="t" style="right:141.30px;text-align:right;top:399.62px;font-size:6.3px;line-height:6.3px;color:#707070;font-weight:400;letter-spacing:0px;font-family:'Liberation Sans', sans-serif;transform:scaleX(0.898);transform-origin:right center;">10</div>
<div class="b" style="left:100px;top:406px;width:451.5px;height:1px;background:#f0f0f0;"></div>
<div class="t" style="left:102.30px;top:409.49px;font-size:6.3px;line-height:6.3px;color:#707070;font-weight:400;letter-spacing:0px;font-family:'Liberation Sans', sans-serif;transform:scaleX(0.8538);transform-origin:left center;">USA_Sites</div>
<div class="t" style="left:167.30px;top:409.49px;font-size:6.3px;line-height:6.3px;color:#707070;font-weight:400;letter-spacing:0px;font-family:'Liberation Sans', sans-serif;transform:scaleX(0.8813);transform-origin:left center;">USA1</div>
<div class="t" style="left:219.80px;top:409.49px;font-size:6.3px;line-height:6.3px;color:#707070;font-weight:400;letter-spacing:0px;font-family:'Liberation Sans', sans-serif;transform:scaleX(0.888);transform-origin:left center;">USA-001</div>
<div class="b" style="left:271px;top:407px;width:60px;height:9px;background:#e09a1f"></div>
<div class="t" style="left:272.20px;top:409.49px;font-size:6.3px;line-height:6.3px;color:#4d3f1d;font-weight:400;letter-spacing:0px;font-family:'Liberation Sans', sans-serif;transform:scaleX(0.9093);transform-origin:left center;">Active</div>
<div class="t" style="left:333.60px;top:409.49px;font-size:6.3px;line-height:6.3px;color:#707070;font-weight:400;letter-spacing:0px;font-family:'Liberation Sans', sans-serif;transform:scaleX(0.8924);transform-origin:left center;">Lot1-Extract</div>
<div class="t" style="right:245.30px;text-align:right;top:409.49px;font-size:6.3px;line-height:6.3px;color:#707070;font-weight:400;letter-spacing:0px;font-family:'Liberation Sans', sans-serif;transform:scaleX(0.8813);transform-origin:right center;">31-Mar-20</div>
<div class="b" style="left:449.2px;top:408.67px;width:6.7px;height:6.7px;border-radius:50%;background:radial-gradient(circle at 40% 30%,#ff7a6a 0%,#d82a1c 50%,#a81212 100%)"></div>
<div class="t" style="left:457.10px;top:409.49px;font-size:6.3px;line-height:6.3px;color:#707070;font-weight:400;letter-spacing:0px;font-family:'Liberation Sans', sans-serif;transform:scaleX(0.8839);transform-origin:left center;">On hold</div>
<div class="t" style="right:141.30px;text-align:right;top:409.49px;font-size:6.3px;line-height:6.3px;color:#707070;font-weight:400;letter-spacing:0px;font-family:'Liberation Sans', sans-serif;transform:scaleX(0.898);transform-origin:right center;">50</div>
<div class="b" style="left:446px;top:213.8px;width:64.2px;height:203.4px;background:none;border:2px solid #fc971a;box-sizing:border-box;"></div>
<div class="b" style="left:564.8px;top:182.4px;width:112.4px;height:137.6px;background:#fff;border:2px solid #fc971a;box-sizing:border-box;"></div>
<svg class="b" style="left:582.3px;top:191.4px" width="7" height="7" viewBox="0 0 7 7"><path d="M0.9 6.7 L3.5 0.5 L6.1 6.7 M2.0 4.5 H5.0" stroke="#505050" stroke-width="1.1" fill="none"/></svg>
<div class="t" style="left:592.40px;top:192.22px;font-size:6.6px;line-height:6.6px;color:#484848;font-weight:700;letter-spacing:0px;font-family:'Liberation Sans', sans-serif;transform:scaleX(0.7827);transform-origin:left center;">Glossary</div>
<div class="b" style="left:578.6px;top:202.0px;width:85.4px;height:1.2px;background:#2aa557;"></div>
<div class="t" style="left:579.40px;top:206.62px;font-size:6.4px;line-height:6.4px;color:#9a9a9a;font-weight:400;letter-spacing:0px;font-family:'Liberation Sans', sans-serif;transform:scaleX(0.8798);transform-origin:left center;">Inventory status</div>
<div class="b" style="left:579.7px;top:213.00px;width:6.7px;height:6.7px;border-radius:50%;background:radial-gradient(circle at 40% 30%,#8fe86a 0%,#2fbf1f 45%,#179214 100%)"></div>
<div class="t" style="left:587.40px;top:213.72px;font-size:6.6px;line-height:6.6px;color:#3c3c3c;font-weight:700;letter-spacing:0px;font-family:'Liberation Sans', sans-serif;transform:scaleX(0.8009);transform-origin:left center;">Available</div>
<div class="t" style="left:579.40px;top:221.62px;font-size:6.4px;line-height:6.4px;color:#737373;font-weight:400;letter-spacing:0px;font-family:'Liberation Sans', sans-serif;transform:scaleX(0.8343);transform-origin:left center;">Kits are available on site and ready</div>
<div class="t" style="left:579.40px;top:229.72px;font-size:6.4px;line-height:6.4px;color:#737373;font-weight:400;letter-spacing:0px;font-family:'Liberation Sans', sans-serif;transform:scaleX(0.8464);transform-origin:left center;">to be dispensed.</div>
<svg class="b" style="left:579.40px;top:244.20px" width="7" height="7" viewBox="0 0 7 7"><rect x="0.2" y="0.2" width="6.6" height="6.6" rx="1.3" fill="#7f9ccf"/><rect x="0.9" y="0.9" width="5.2" height="5.2" rx="0.9" fill="#e9eef8"/><path d="M5.0 2.4 A1.75 1.75 0 1 0 5.0 4.6" stroke="#4b6fb3" stroke-width="0.9" fill="none"/></svg>
<div class="t" style="left:587.40px;top:244.72px;font-size:6.6px;line-height:6.6px;color:#3c3c3c;font-weight:700;letter-spacing:0px;font-family:'Liberation Sans', sans-serif;transform:scaleX(0.8407);transform-origin:left center;">Awaiting</div>
<div class="t" style="left:579.40px;top:252.72px;font-size:6.4px;line-height:6.4px;color:#737373;font-weight:400;letter-spacing:0px;font-family:'Liberation Sans', sans-serif;transform:scaleX(0.8629);transform-origin:left center;">Kits are still in transit.</div>
<div class="b" style="left:579.7px;top:268.10px;width:6.7px;height:6.7px;border-radius:50%;background:radial-gradient(circle at 40% 30%,#ff7a6a 0%,#d82a1c 50%,#a81212 100%)"></div>
<div class="t" style="left:587.40px;top:268.72px;font-size:6.6px;line-height:6.6px;color:#3c3c3c;font-weight:700;letter-spacing:0px;font-family:'Liberation Sans', sans-serif;transform:scaleX(0.807);transform-origin:left center;">On hold</div>
<div class="t" style="left:579.40px;top:276.62px;font-size:6.4px;line-height:6.4px;color:#737373;font-weight:400;letter-spacing:0px;font-family:'Liberation Sans', sans-serif;transform:scaleX(0.8586);transform-origin:left center;">Kits are either quarantined,</div>
<div class="t" style="left:579.40px;top:284.42px;font-size:6.4px;line-height:6.4px;color:#737373;font-weight:400;letter-spacing:0px;font-family:'Liberation Sans', sans-serif;transform:scaleX(0.8735);transform-origin:left center;">suspended or temporarily</div>
<div class="t" style="left:579.40px;top:292.22px;font-size:6.4px;line-height:6.4px;color:#737373;font-weight:400;letter-spacing:0px;font-family:'Liberation Sans', sans-serif;transform:scaleX(0.8392);transform-origin:left center;">unavailable. Those kits are</div>
<div class="t" style="left:579.40px;top:300.02px;font-size:6.4px;line-height:6.4px;color:#737373;font-weight:400;letter-spacing:0px;font-family:'Liberation Sans', sans-serif;transform:scaleX(0.8633);transform-origin:left center;">excluded from Supply App</div>
<div class="t" style="left:579.40px;top:307.82px;font-size:6.4px;line-height:6.4px;color:#737373;font-weight:400;letter-spacing:0px;font-family:'Liberation Sans', sans-serif;transform:scaleX(0.8872);transform-origin:left center;">simulation.</div>
<div class="t" style="left:579.40px;top:323.42px;font-size:6.4px;line-height:6.4px;color:#9a9a9a;font-weight:400;letter-spacing:0px;font-family:'Liberation Sans', sans-serif;transform:scaleX(0.8661);transform-origin:left center;">Next stable dispensing</div>
<svg class="b" style="left:579.4px;top:331px" width="7" height="6" viewBox="0 0 7 6"><circle cx="3.4" cy="3" r="2.6" stroke="#555" stroke-width="0.8" fill="#f4f4f4"/><path d="M3.4 1.2 V3.2 H4.9" stroke="#555" stroke-width="0.7" fill="none"/></svg>
<div class="t" style="left:587.80px;top:331.02px;font-size:6.6px;line-height:6.6px;color:#3c3c3c;font-weight:700;letter-spacing:0px;font-family:'Liberation Sans', sans-serif;transform:scaleX(0.8174);transform-origin:left center;">Patient out of window</div>
<div class="t" style="left:579.40px;top:338.72px;font-size:6.4px;line-height:6.4px;color:#737373;font-weight:400;letter-spacing:0px;font-family:'Liberation Sans', sans-serif;transform:scaleX(0.8708);transform-origin:left center;">According to the &quot;Latest next visit</div>
<div class="t" style="left:579.40px;top:346.57px;font-size:6.4px;line-height:6.4px;color:#737373;font-weight:400;letter-spacing:0px;font-family:'Liberation Sans', sans-serif;transform:scaleX(0.8557);transform-origin:left center;">date&quot;, this patient is late for his</div>
<div class="t" style="left:579.40px;top:354.42px;font-size:6.4px;line-height:6.4px;color:#737373;font-weight:400;letter-spacing:0px;font-family:'Liberation Sans', sans-serif;transform:scaleX(0.8896);transform-origin:left center;">next visit.</div>
<div class="b" style="left:576.4px;top:373.6px;width:91.4px;height:19.5px;background:#fff;border:1px solid #8fd7e0;box-sizing:border-box;border-radius:1px;"></div>
<svg class="b" style="left:579.3px;top:380.5px" width="6" height="6" viewBox="0 0 6 6"><path d="M0.8 0 V6 M2.95 0 V6 M5.1 0 V6" stroke="#2bb5c8" stroke-width="0.8"/><rect x="0" y="1.2" width="1.6" height="1.3" fill="#2bb5c8"/><rect x="2.15" y="3.4" width="1.6" height="1.3" fill="#2bb5c8"/><rect x="4.3" y="1.6" width="1.6" height="1.3" fill="#2bb5c8"/></svg>
<div class="t" style="left:586.80px;top:380.87px;font-size:6.5px;line-height:6.5px;color:#36b6c8;font-weight:400;letter-spacing:0px;font-family:'Liberation Sans', sans-serif;transform:scaleX(0.84);transform-origin:left center;">Depot inventories</div>
<div class="b" style="left:576.4px;top:396.8px;width:91.4px;height:20px;background:#07b3c8;"></div>
<svg class="b" style="left:579.3px;top:403.7px" width="6" height="6" viewBox="0 0 6 6"><path d="M0.8 0 V6 M2.95 0 V6 M5.1 0 V6" stroke="#ffffff" stroke-width="0.8"/><rect x="0" y="1.2" width="1.6" height="1.3" fill="#ffffff"/><rect x="2.15" y="3.4" width="1.6" height="1.3" fill="#ffffff"/><rect x="4.3" y="1.6" width="1.6" height="1.3" fill="#ffffff"/></svg>
<div class="t" style="left:587.60px;top:404.07px;font-size:6.5px;line-height:6.5px;color:#ffffff;font-weight:400;letter-spacing:0px;font-family:'Liberation Sans', sans-serif;transform:scaleX(0.9178);transform-origin:left center;">Site inventories</div>
</body></html>
